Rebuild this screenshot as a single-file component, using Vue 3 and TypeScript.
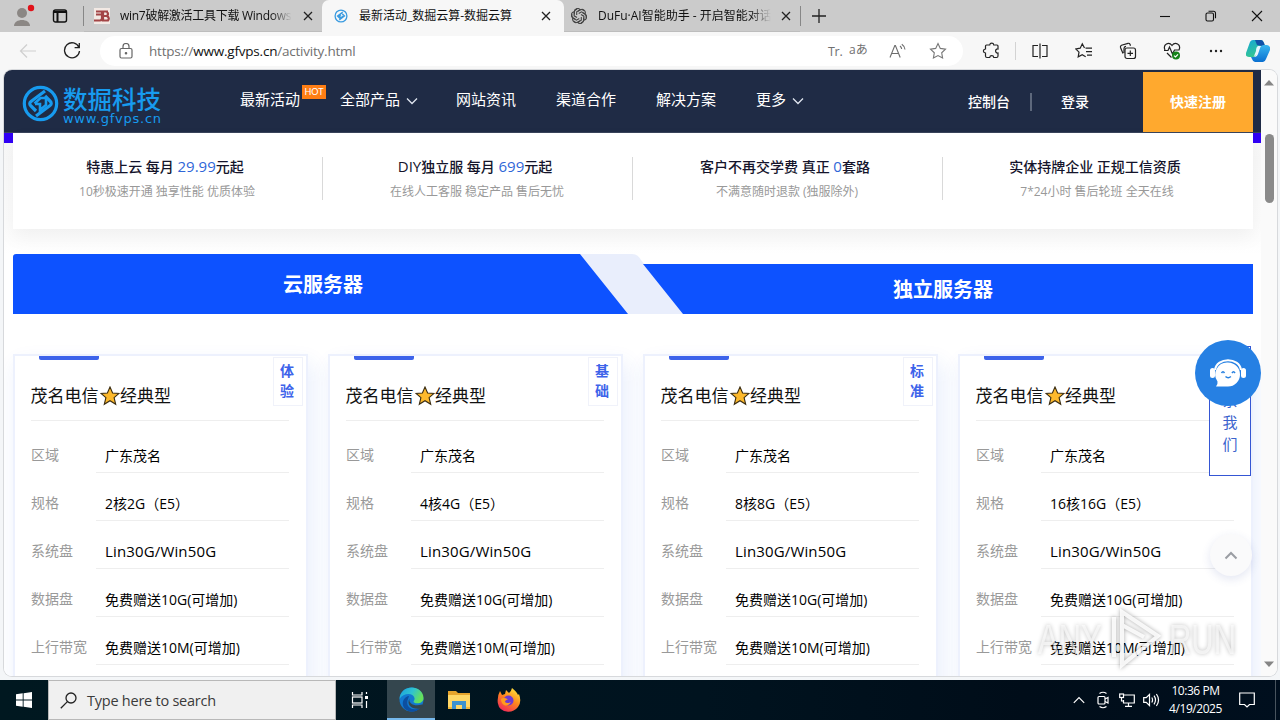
<script setup lang="ts">
interface Plan { tag: string[]; spec: string }
interface Feature { before: string; num: string; after: string; sub: string }

const plans: Plan[] = [
  { tag: ['体', '验'], spec: '2核2G（E5）' },
  { tag: ['基', '础'], spec: '4核4G（E5）' },
  { tag: ['标', '准'], spec: '8核8G（E5）' },
  { tag: ['专', '业'], spec: '16核16G（E5）' },
]
const rowsOf = (p: Plan): [string, string][] => [
  ['区域', '广东茂名'],
  ['规格', p.spec],
  ['系统盘', 'Lin30G/Win50G'],
  ['数据盘', '免费赠送10G(可增加)'],
  ['上行带宽', '免费赠送10M(可增加)'],
]
const runs = (s: string): { t: string; latin: boolean; long: boolean }[] =>
  (s.match(/[A-Za-z0-9/]+|[^A-Za-z0-9/]+/g) ?? []).map((t) => ({
    t,
    latin: /[A-Za-z0-9]/.test(t),
    long: /^[A-Za-z0-9/]{6,}$/.test(t),
  }))

const features: Feature[] = [
  { before: '特惠上云 每月 ', num: '29.99', after: '元起', sub: '10秒极速开通 独享性能 优质体验' },
  { before: 'DIY独立服 每月 ', num: '699', after: '元起', sub: '在线人工客服 稳定产品 售后无忧' },
  { before: '客户不再交学费 真正 ', num: '0', after: '套路', sub: '不满意随时退款 (独服除外)' },
  { before: '实体持牌企业 正规工信资质', num: '', after: '', sub: '7*24小时 售后轮班 全天在线' },
]
const nav = [
  { t: '最新活动', hot: true, more: false },
  { t: '全部产品', hot: false, more: true },
  { t: '网站资讯', hot: false, more: false },
  { t: '渠道合作', hot: false, more: false },
  { t: '解决方案', hot: false, more: false },
  { t: '更多', hot: false, more: true },
]
</script>

<template>
  <div class="desktop">
    <header class="tabs">
      <div class="profile">
        <svg width="32" height="32" viewBox="0 0 32 32"><circle cx="12" cy="13" r="5" fill="#8b8784" /><path d="M4 26c0-8 16-8 16 0z" fill="#8b8784" /><circle cx="21" cy="8" r="3.2" fill="#e1121a" /></svg>
      </div>
      <svg class="panes" width="16" height="16" viewBox="0 0 16 16" fill="none" stroke="#111" stroke-width="1.4"><rect x="1.5" y="2" width="13" height="12" rx="2" /><path d="M2 4h12M5.5 4v10" stroke-width="2" /></svg>
      <i class="vsep"></i>
      <div class="tab t1">
        <svg class="fav" width="16" height="16" viewBox="0 0 16 16"><rect width="16" height="16" fill="#f3e9e4" /><path d="M2 3.5h12M2 6.5h6M0 12.5h6q2 0 2-2.5V3M9 4v8.5h5q2-2.5-1-4.5 2-2 0-4M9 8h4" fill="none" stroke="#a34546" stroke-width="2.2" /></svg>
        <span class="tt fade">win7破解激活工具下载 Windows</span>
        <svg class="x" width="10" height="10" viewBox="0 0 10 10"><path d="M1 1l8 8M9 1l-8 8" /></svg>
      </div>
      <div class="tab t2">
        <svg class="fav" width="14" height="14" viewBox="0 0 32 32" fill="none" stroke="#3a9be0"><circle cx="16" cy="16" r="13.5" stroke-width="3" /><path d="M20 7L8 16l7 7M12 25l12-9-7-7M16 13l-4 3 4 4 5-4" stroke-width="3" /></svg>
        <span class="tt">最新活动_数掘云算-数掘云算</span>
        <svg class="x" width="10" height="10" viewBox="0 0 10 10"><path d="M1 1l8 8M9 1l-8 8" /></svg>
      </div>
      <div class="tab t3">
        <svg class="fav" width="16" height="16" viewBox="-8 -8 16 16" fill="none" stroke="#444" stroke-width="1.1"><path v-for="k in 6" :key="k" d="M-4.600 -1.500V-4.300A3.300 3.300 0 0 1 1-6.600M-2.300-1V-4.300L1.200-6.300Q3.500-7 5-5" :transform="`rotate(${k * 60})`" /></svg>
        <span class="tt fade">DuFu·AI智能助手 - 开启智能对话</span>
        <svg class="x" width="10" height="10" viewBox="0 0 10 10"><path d="M1 1l8 8M9 1l-8 8" /></svg>
      </div>
      <i class="vsep"></i>
      <svg class="plus" width="14" height="14" viewBox="0 0 14 14"><path d="M7 0v14M0 7h14" stroke="#222" stroke-width="1.3" /></svg>
      <div class="winbtns">
        <svg width="12" height="12" viewBox="0 0 12 12"><path d="M1 6.5h10" /></svg>
        <svg width="12" height="12" viewBox="0 0 12 12"><rect x="1" y="3" width="7.5" height="8" rx="1.5" /><path d="M3.5 1.2h5q2 0 2 2v5" /></svg>
        <svg width="12" height="12" viewBox="0 0 12 12"><path d="M1 1l10 10M11 1L1 11" /></svg>
      </div>
    </header>

    <div class="toolbar">
      <svg class="back" width="18" height="16" viewBox="0 0 18 16"><path d="M17 8H1.5M8 1.5L1.5 8 8 14.5" fill="none" stroke="#cfcfcf" stroke-width="1.2" /></svg>
      <svg class="reload" width="18" height="18" viewBox="0 0 18 18"><path d="M16 5.5A7.5 7.5 0 1 0 16.5 9M16.3 1v4.7h-4.7" fill="none" stroke="#222" stroke-width="1.3" /></svg>
      <div class="address">
        <svg width="14" height="16" viewBox="0 0 14 16" fill="none" stroke="#666" stroke-width="1.2"><rect x="1" y="5.500" width="12" height="9.500" rx="1.500" /><path d="M4 5.500V3.500a3 3 0 0 1 6 0v2" /><circle cx="7" cy="10.300" r=".7" fill="#666" /></svg>
        <span class="url">https://<b>www.gfvps.cn</b>/activity.html</span>
        <span class="tr">Tr.</span><span class="aa">aあ</span>
        <svg class="read" width="18" height="16" viewBox="0 0 18 16" fill="none" stroke="#6d6d6d" stroke-width="1.1"><path d="M1 14.500L5.800 2.500h.6l4.800 12M2.800 10.500h6.700M11 3q1.500 1.200 1.700 3M12.800 1.200q3 2 3.200 5.300" /></svg>
        <svg class="fst" width="18" height="18" viewBox="0 0 18 18"><path d="M9 1.500l2.300 4.900 5.200.7-3.800 3.700.9 5.300L9 13.600l-4.600 2.500.9-5.300L1.500 7.100l5.200-.7z" fill="none" stroke="#777" stroke-width="1.100" /></svg>
      </div>
      <div class="tools">
        <svg class="i1" width="18" height="18" viewBox="0 0 18 18"><path d="M4.500 3h3.200c.3-2.600 3.800-2.600 4.100 0H15q1 0 1 1v3c-3.200-.5-3.200 4.500 0 4v3q0 1.500-1.500 1.500h-2.700c-.3-2.600-3.800-2.600-4.100 0H5q-1.500 0-1.500-1.500V11c-2.800-.3-2.800-3.700 0-4V4q0-1 1-1z" /></svg>
        <i class="bar"></i>
        <svg class="i2" width="18" height="16" viewBox="0 0 18 16"><path d="M7 2.500H2v11h5M11 2.500h5v11h-5M9 .5v15" /></svg>
        <svg class="i3" width="18" height="18" viewBox="0 0 18 18"><path d="M9.500 6L7.300 1.800 5.200 6.200l-4.400.7 3.200 3.200-.8 4.700 4-2.100 3.500 2M10.500 6.200h6.500M11 9.700h6M12 13.200h5" /></svg>
        <svg class="i4" width="18" height="18" viewBox="0 0 18 18"><path d="M4 11.500L1.500 5.500Q1 4 2.500 3.200L9 1.300q1.500-.2 2 1l.5 1.500M5 11V6.500Q5 4.500 7 4.300" /><rect x="6" y="6" width="10.500" height="10.500" rx="2" /><path d="M11.300 8.500v5.500M8.500 11.300H14" /></svg>
        <svg class="i5" width="18" height="18" viewBox="0 0 18 18"><path d="M2 8C-.5 2 6-.5 9 3.500 12-.5 18.500 2 16 8M1 8.500h4L6.500 5l3 7 2-4h5M4 11l4.500 4.500" /><circle cx="13" cy="13.500" r="4" fill="#168319" stroke="none" /><path d="M11 13.600l1.500 1.400 2.500-2.700" stroke="#fff" /></svg>
        <svg class="i6" width="16" height="6" viewBox="0 0 16 6"><g fill="#222" stroke="none"><circle cx="3" cy="3" r="1.200" /><circle cx="8" cy="3" r="1.200" /><circle cx="13" cy="3" r="1.200" /></g></svg>
        <svg class="cop" width="24" height="24" viewBox="0 0 24 24"><defs><linearGradient id="ca" x1="0" y1="0" x2=".5" y2="1"><stop offset="0" stop-color="#14a5d8" /><stop offset="1" stop-color="#36c98d" /></linearGradient><linearGradient id="cb" x1="0" y1="0" x2="0" y2="1"><stop offset="0" stop-color="#39b7f0" /><stop offset="1" stop-color="#0a6fd0" /></linearGradient></defs><path d="M7 1h8q2 0 3 3l1 3h-4q-2 0-3 3l-2 6q-1 2-3 2H3q-4 0-3-4L4 3q1-2 3-2z" fill="url(#ca)" stroke="none" /><path d="M9 1h6q2 0 3 3l1 3h-3l-5-1z" fill="#1151a8" stroke="none" /><path d="M17 23H9q-2 0-3-3l-1-2h3q3 0 4-3l2-6q1-3 4-3h3q4 1 3 5l-4 9q-1 3-3 3z" fill="url(#cb)" stroke="none" /><path d="M12 7h3q-2 1-2 3l-2 5q-1 2-3 2l2-5q0-4 2-5z" fill="#e4f6ff" stroke="none" /></svg>
      </div>
    </div>

    <div class="frame">
      <main class="page">
        <div class="head">
          <svg class="mark" width="37" height="37" viewBox="0 0 37 37" fill="none" stroke="#179bef"><circle cx="18.500" cy="18.500" r="16.200" stroke-width="3.200" /><path d="M23 6L9 16.500q-2.500 2 0 4.500l5 5M14 31l14-10.500q2.500-2 0-4.500l-5-5" stroke-width="3.200" /><path d="M12.500 18.500l6-5.500h5.500v7l-6 5v-6h-5" stroke-width="2.600" /></svg>
          <div class="brand"><strong>数掘科技</strong><span>www.gfvps.cn</span></div>
          <nav>
            <a v-for="n in nav" :key="n.t">{{ n.t }}<svg v-if="n.more" width="12" height="8" viewBox="0 0 12 8"><path d="M1 1.500l5 5 5-5" fill="none" stroke="#dfe5ef" stroke-width="1.300" /></svg><em v-if="n.hot">HOT</em></a>
          </nav>
          <div class="acct"><span>控制台</span><i></i><span>登录</span></div>
          <button>快速注册</button>
        </div>
        <div class="strip">
          <section class="features">
            <div v-for="f in features" :key="f.sub" class="feature">
              <h4><template v-for="(r, i) in runs(f.before)" :key="i"><span :class="{ lat: r.latin }">{{ r.t }}</span></template><b>{{ f.num }}</b>{{ f.after }}</h4>
              <p>{{ f.sub }}</p>
            </div>
          </section>
        </div>
        <section class="switch">
          <svg class="shape" width="1240" height="60" viewBox="0 0 1240 60"><path d="M566 0h53q6 0 9 6l43 54h-57z" fill="#e9eefc" /><path d="M3 0h564l48 60H0V3q0-3 3-3zM630 10h610v50H670z" fill="#0d52ff" /></svg>
          <h2>云服务器</h2>
          <h2 class="second">独立服务器</h2>
        </section>
        <section class="plans">
          <article v-for="p in plans" :key="p.spec">
            <i class="accent"></i>
            <div class="tag"><span v-for="c in p.tag" :key="c">{{ c }}</span></div>
            <h3>茂名电信<svg width="20" height="20" viewBox="0 0 20 20"><path d="M10 1l2.600 6 6.400.500-4.900 4.200 1.600 6.600L10 14.700l-5.700 3.600 1.600-6.600L1 7.500 7.400 7z" fill="#fdb92c" stroke="#3a2c12" stroke-width="1.100" /></svg>经典型</h3>
            <dl v-for="[k, v] in rowsOf(p)" :key="k">
              <dt>{{ k }}</dt>
              <dd><span v-for="(r, i) in runs(v)" :key="i" :class="{ lat: r.latin, long: r.long }">{{ r.t }}</span></dd>
            </dl>
          </article>
        </section>
      </main>
      <div class="scroll">
        <svg width="10" height="6" viewBox="0 0 10 6"><path d="M0 5.500L5 0l5 5.500z" fill="#858585" /></svg>
        <i></i>
        <svg class="dn" width="10" height="6" viewBox="0 0 10 6"><path d="M0 .5L5 6l5-5.500z" fill="#858585" /></svg>
      </div>
      <div class="contact"><span>联</span><span>系</span><span>我</span><span>们</span></div>
      <div class="service">
        <svg width="40" height="34" viewBox="0 0 40 34"><path d="M7 14C9 1 31 1 33 14" fill="none" stroke="#fff" stroke-width="2.200" /><rect x="2" y="12" width="5" height="10" rx="2.500" fill="#fff" /><rect x="33" y="12" width="5" height="10" rx="2.500" fill="#fff" /><path d="M20 6.500a12 12 0 1 1 0 24H8q2-2 1.500-5A12 12 0 0 1 20 6.500z" fill="#fff" /><path d="M13.500 17q1.500-2.500 3 0M24 17q1.500-2.500 3 0M17.500 20.500q2.700 2.500 5.400 0" fill="none" stroke="#2680e0" stroke-width="1.500" /></svg>
      </div>
      <div class="totop"><svg width="14" height="9" viewBox="0 0 14 9"><path d="M1.500 7.500L7 2l5.500 5.500" fill="none" stroke="#9a9da3" stroke-width="2" /></svg></div>
      <div class="wm">
        <span>ANY</span>
        <svg width="54" height="62" viewBox="0 0 54 62" fill="none" stroke="#fff" stroke-opacity=".85" stroke-width="4"><path d="M14 4l36 24-36 29zM14 17l22 12M6 9v40M14 57V17" /></svg>
        <span>RUN</span>
      </div>
    </div>

    <footer class="taskbar">
      <div class="start"><svg width="16" height="16" viewBox="0 0 16 16" fill="#fff"><path d="M0 2.200L6.700 1.300v6.300H0zM7.600 1.200L16 0v7.600H7.600zM0 8.500h6.700v6.200L0 13.800zM7.600 8.500H16V16l-8.400-1.200z" /></svg></div>
      <div class="search"><svg width="17" height="17" viewBox="0 0 17 17" fill="none" stroke="#222" stroke-width="1.300"><circle cx="11" cy="6" r="5" /><path d="M7.400 9.600L.8 16.200" /></svg><span>Type here to search</span></div>
      <div class="tv"><svg width="18" height="16" viewBox="0 0 18 16" fill="none" stroke="#fff" stroke-width="1.200"><path d="M1.500 0v3h9.500V0M1.500 16v-3h9.500v3M15.500 0v2M15.500 9v7" /><rect x="1.500" y="5" width="9.500" height="6" /><path d="M14 5.500h3" stroke-width="3" /></svg></div>
      <div class="app active"><svg width="25" height="25" viewBox="0 0 25 25"><defs><linearGradient id="eg" x1="0" y1="0" x2="1" y2=".4"><stop offset="0" stop-color="#1aa0e0" /><stop offset=".55" stop-color="#2fc3d0" /><stop offset="1" stop-color="#66e05a" /></linearGradient></defs><circle cx="12.500" cy="12.500" r="12" fill="#1279d0" /><path d="M.5 12C1.500-3.500 24-3 24.500 11c.2 5-6 6.500-9.500 4.500-1.500-1 1-2 .5-4.500C14 5 4 6 .5 12z" fill="url(#eg)" /><path d="M9 12c-3 7 3 13 12 9-4 5-12 4.500-15.500.500C2 17 4 10 10 9z" fill="#0c4fa0" /><path d="M10.500 11.500c-1.500 5 5 8.500 12.500 6l1.500 1.500-3 2.500C13 23 7 18 10.500 11.500z" fill="#33454e" /></svg></div>
      <div class="app"><svg width="23" height="20" viewBox="0 0 23 20"><path d="M0 1h8l2 2h12v16H0z" fill="#e6a42c" /><path d="M0 5h22v14H0z" fill="#ffd766" /><path d="M4 19v-8h14v8h-4v-4H8v4z" fill="#3c92cf" /><path d="M0 17h4v2H0zM18 17h4v2h-4z" fill="#f3b93c" /></svg></div>
      <div class="app"><svg width="24" height="24" viewBox="0 0 24 24"><defs><linearGradient id="ff" x1=".8" y1="0" x2=".2" y2="1"><stop offset="0" stop-color="#ffe63d" /><stop offset=".45" stop-color="#ff8a1c" /><stop offset="1" stop-color="#f0225d" /></linearGradient></defs><path d="M3 3l2 4 3-1 1-4 3 3q2-1 3-5 5 4 6 7l1-1q3 8-1 13-4 5-10 4.800Q2 23 .8 15 0 8 3 3z" fill="url(#ff)" /><circle cx="11.500" cy="12.500" r="5" fill="#6d3ad2" /><path d="M4 11q3-2 7 .5-3 .5-3 2.500 2 2 6 0-3 5-7 3-3-2-3-6z" fill="#ff9b1e" /></svg></div>
      <div class="tray">
        <svg class="c1" width="12" height="8" viewBox="0 0 12 8"><path d="M.8 6.800L6 1.600l5.200 5.200" /></svg>
        <svg class="c2" width="12" height="18" viewBox="0 0 12 18"><rect x="1" y="5.500" width="7" height="7.500" rx="1" /><path d="M8 8l3-1.500v5.500L8 10.500M2.500 2.500q3.500-2.500 7 0M2.500 15.500q3.500 2.500 7 0" /></svg>
        <svg class="c3" width="16" height="16" viewBox="0 0 16 16"><path d="M5 3h10.300v8H4.500V8M9.500 11v3M6 14.300h7" /><rect x=".7" y="2" width="3.800" height="3.500" /><path d="M2.500 5.500V9h2" /></svg>
        <svg class="c4" width="17" height="14" viewBox="0 0 17 14"><path d="M.7 4.700h2.500L6.500 1.500v11L3.200 9.300H.7zM8.800 4.500q1.500 2.500 0 5M11 2.700q3 4.300 0 8.600M13.400 1q4.300 6 0 12" /></svg>
        <div class="clock"><span>10:36 PM</span><span>4/19/2025</span></div>
        <svg class="c5" width="16" height="16" viewBox="0 0 16 16"><path d="M.7 1h14.600v11.500H10.500L8 15l-2.500-2.500H.7z" /></svg>
        <i class="peek"></i>
      </div>
    </footer>
  </div>
</template>

<style>
html, body { margin: 0; overflow: hidden; }
</style>

<style scoped>
* { box-sizing: border-box; }
i, em { font-style: normal; display: block; flex: none; }
svg { flex: none; display: block; }
.desktop { width: 1280px; height: 720px; display: flex; flex-direction: column; background: #f4f6f8; font-family: "Open Sans", "Noto Sans CJK SC", sans-serif; overflow: hidden; }

.tabs { height: 32px; flex: none; display: flex; align-items: center; background: #cbcbcb; }
.profile { width: 40px; padding-left: 10px; }
.panes { margin: 0 15px 0 12px; }
.vsep { width: 1px; height: 20px; background: #878787; }
.tab { height: 32px; display: flex; align-items: center; font-size: 12px; color: #111; border-bottom: 1px solid #bdbdbd; }
.tt { white-space: nowrap; overflow: hidden; line-height: 20px; }
.fade { -webkit-mask-image: linear-gradient(90deg, #000 88%, transparent); mask-image: linear-gradient(90deg, #000 88%, transparent); }
.x { stroke: #222; stroke-width: 1.3; }
.t1 { width: 238px; padding-left: 10px; }
.t1 .tt { width: 172px; margin: 0 11px 0 10px; letter-spacing: -.28px; }
.t2 { width: 242px; padding-left: 12px; background: #f7f7f7; border: 0; border-radius: 7px 7px 0 0; }
.t2 .tt { width: 171px; margin: 0 11px 0 11px; }
.t3 { width: 236px; padding-left: 7px; }
.t3 .tt { width: 173px; margin: 0 10px 0 11px; }
.plus { margin-left: 11px; }
.winbtns { margin-left: auto; display: flex; gap: 34px; padding-right: 17px; fill: none; stroke: #111; stroke-width: 1.1; }

.toolbar { height: 38px; flex: none; display: flex; align-items: center; background: #f7f7f7; }
.back { margin-left: 19px; }
.reload { margin-left: 26px; }
.address { margin-left: 19px; width: 863px; height: 30px; border-radius: 15px; background: #fff; display: flex; align-items: center; padding-left: 19px; font-size: 13.5px; color: #707070; }
.url { margin-left: 16px; width: 679px; letter-spacing: -.22px; }
.url b { font-weight: 400; color: #111; }
.tr { width: 21px; font-size: 12.5px; letter-spacing: -.3px; }
.aa { width: 40px; font-size: 12px; line-height: 16px; margin-top: -3px; }
.read { width: 18px; }
.fst { margin-left: 22px; }
.tools { display: flex; align-items: center; fill: none; stroke: #222; stroke-width: 1.2; }
.i1 { margin-left: 19px; }
.bar { width: 1px; height: 18px; background: #d3d3d3; margin: 0 15px; }
.i3 { margin-left: 26px; }
.i4 { margin-left: 26px; }
.i5 { margin-left: 26px; }
.i6 { margin-left: 27px; }
.cop { margin-left: 22px; }

.frame { position: relative; height: 606px; flex: none; margin: 0 3px 4px 4px; display: flex; background: #fff; border-radius: 8px; overflow: hidden; box-shadow: 0 0 0 1px #d7d9dc; }
.desktop > .frame { z-index: 1; }
.page { width: 1257px; height: 606px; overflow: hidden; background: #fff; }
.head { height: 63px; background: #1f2b45; display: flex; border-bottom: 1px solid #39445b; color: #fff; }
.mark { margin: 15px 0 0 18px; }
.brand { margin: 14px 0 0 4px; width: 99px; color: #179bef; display: flex; flex-direction: column; }
.brand strong { font: 500 24.5px/30px "Noto Sans CJK SC", sans-serif; white-space: nowrap; }
.brand span { font: 400 13px/12px "DejaVu Sans", sans-serif; white-space: nowrap; letter-spacing: .74px; margin-top: -1px; }
nav { display: flex; gap: 40px; margin-left: 78px; height: 58px; align-items: center; font-size: 15px; }
nav a { position: relative; display: flex; align-items: center; white-space: nowrap; line-height: 20px; }
nav a svg { margin: 3px -2px 0 6px; }
nav em { position: absolute; left: 62px; top: -4px; width: 24px; height: 14px; background: #ff7e14; font: 9px/14px Lato, sans-serif; text-align: center; }
.acct { margin-left: 166px; display: flex; align-items: center; height: 64px; font-size: 14px; font-weight: 500; width: 175px; }
.acct span { position: relative; top: -1px; }
.acct i { width: 2px; height: 18px; background: #5d687c; margin: 0 29px 0 20px; }
.head button { width: 110px; height: 60px; margin-top: 2px; border: 0; padding: 0 0 2px; background: #ffa92e; color: #fff; font: 700 14px "Noto Sans CJK SC", sans-serif; }

.strip { height: 121px; padding: 0 8px 0 9px; background: linear-gradient(#3100f5 10px, #f8f8f8 10px, #fdfdfd 108px, #fff); }
.features { height: 96px; background: #fff; box-shadow: 0 8px 18px rgba(0, 0, 0, .05); display: flex; }
.feature { flex: 1; position: relative; text-align: center; padding: 23px 6px 0 0; white-space: nowrap; }
.feature:not(:last-child)::after { content: ""; position: absolute; right: 0; top: 24px; width: 1px; height: 43px; background: #d9d9d9; }
h4 { margin: 0; font-size: 14px; line-height: 20px; color: #14142b; font-weight: 500; }
h4 .lat { font-size: 15px; }
h4 b { color: #2f66d8; font: 400 15px/20px "Open Sans", sans-serif; }
.feature p { margin: 6px 0 0 4px; font-size: 12px; line-height: 18px; color: #999; }

.switch { position: relative; margin: 0 4px 0 9px; width: 1240px; height: 60px; display: flex; }
.shape { position: absolute; inset: 0; }
h2 { position: relative; flex: 1; margin: 0; text-align: center; color: #fff; font: 700 20px/60px "Noto Sans CJK SC", sans-serif; }
.second { line-height: 70px; }

.plans { margin: 40px 0 0 9px; width: 1240px; display: grid; grid-template-columns: repeat(4, 295px); gap: 20px; }
article { position: relative; height: 400px; border: 2px solid #edf1fd; padding: 0 17px 0 16px; background: #fff; box-shadow: 4px 10px 20px rgba(50, 100, 230, .11); }
.accent { position: absolute; left: 24px; top: 0; width: 60px; height: 4px; background: #3d63ea; border-radius: 0 0 2px 2px; }
.tag { position: absolute; right: 3px; top: 1px; width: 30px; height: 49px; border: 1px solid #f0f2fa; display: flex; flex-direction: column; align-items: center; padding: 2px 2px 0 0; color: #3d63ea; font: 700 14px/20px "Noto Sans CJK SC", sans-serif; }
h3 { margin: 0 0 4px; height: 65px; border-bottom: 1px solid #eee; display: flex; align-items: center; padding-top: 15px; font: 400 17px/24px "Noto Sans CJK SC", sans-serif; color: #111; white-space: nowrap; text-indent: -.5px; padding-bottom: 2px; }
h3 svg { margin: 2px 1px 0 1px; }
dl { margin: 0; height: 48px; display: flex; font-size: 14px; white-space: nowrap; }
dt { width: 65px; color: #999; line-height: 60px; }
dd { margin: 0; flex: 1; padding-left: 9px; line-height: 61px; height: 48px; border-bottom: 1px solid #eee; color: #000; }
dd .lat { line-height: 1; }
dd .long { font-size: 15px; letter-spacing: .15px; }

.scroll { width: 16px; background: #fafafa; display: flex; flex-direction: column; align-items: center; padding: 10px 0 9px; }
.scroll i { width: 9px; height: 69px; border-radius: 5px; background: #8a8a8a; margin-top: 48px; }
.scroll .dn { margin-top: auto; }

.contact { position: absolute; left: 1205px; top: 276px; width: 42px; height: 130px; border: 1px solid #3556d4; background: #fff; color: #3b63cd; display: flex; flex-direction: column; align-items: center; font-size: 15px; line-height: 22px; padding-top: 20px; }
.service { position: absolute; left: 1191px; top: 270px; width: 66px; height: 66px; border-radius: 50%; background: #2680e3; display: flex; align-items: center; justify-content: center; }
.totop { position: absolute; left: 1206px; top: 464px; width: 42px; height: 42px; border-radius: 50%; background: #fafafb; box-shadow: 0 3px 10px rgba(60, 80, 160, .14); display: flex; align-items: center; justify-content: center; }
.wm { position: absolute; left: 1034px; top: 538px; display: flex; align-items: center; filter: drop-shadow(0 0 2px rgba(0, 0, 0, .4)); color: rgba(255, 255, 255, .6); font: 400 43px/62px "Liberation Sans Narrow", "Liberation Sans", sans-serif; }
.wm span { display: block; width: 66px; transform: scaleX(.72); transform-origin: 0 50%; white-space: nowrap; }
.wm svg { margin: 0 7px 0 4px; }

.taskbar { height: 40px; flex: none; display: flex; align-items: center; background: linear-gradient(90deg, #001820, #00131f 55%, #000d19 80%, #000f1e); }
.start { width: 48px; display: flex; justify-content: center; }
.search { width: 288px; height: 40px; background: #f0f0f0; border: 1px solid #b8b8b8; display: flex; align-items: center; padding-left: 11px; font-size: 14.5px; color: #3b3b3b; }
.search span { margin-left: 10px; letter-spacing: -.24px; }
.tv { width: 51px; display: flex; justify-content: center; padding-right: 3px; }
.app { width: 49px; height: 40px; display: flex; align-items: center; justify-content: center; }
.active { width: 48px; background: #34464e; border-bottom: 2px solid #76b9ed; }
.tray { margin-left: auto; display: flex; align-items: center; height: 40px; fill: none; stroke: #fff; stroke-width: 1.2; }
.c2 { margin-left: 12px; }
.c3 { margin-left: 10px; }
.c4 { margin-left: 8px; }
.clock { width: 71px; display: flex; flex-direction: column; align-items: center; color: #fff; font-size: 12px; line-height: 18px; letter-spacing: -.45px; }
.c5 { margin-left: 8px; }
.peek { width: 1px; height: 40px; background: #48545e; margin: 0 4px 0 20px; }
</style>
